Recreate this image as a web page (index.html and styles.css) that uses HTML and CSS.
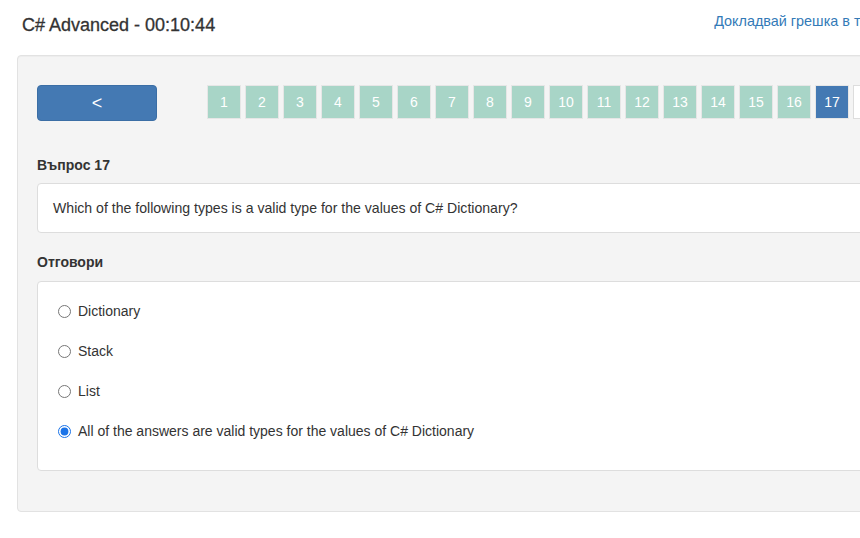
FILE: index.html
```html
<!DOCTYPE html>
<html lang="bg">
<head>
<meta charset="utf-8">
<title>C# Advanced</title>
<link rel="stylesheet" href="styles.css">
</head>
<body>
<div class="page">
  <header class="top">
    <h1 class="title">C# Advanced - 00:10:44</h1>
    <a class="report" href="#">Докладвай грешка в тест</a>
  </header>
  <main class="panel">
    <div class="nav">
      <button class="back">&lt;</button>
      <div class="pages">
        <span class="pg">1</span><span class="pg">2</span><span class="pg">3</span><span class="pg">4</span><span class="pg">5</span><span class="pg">6</span><span class="pg">7</span><span class="pg">8</span><span class="pg">9</span><span class="pg">10</span><span class="pg">11</span><span class="pg">12</span><span class="pg">13</span><span class="pg">14</span><span class="pg">15</span><span class="pg">16</span><span class="pg active">17</span><span class="pg empty"></span><span class="pg empty"></span>
      </div>
    </div>
    <div class="label q-label">Въпрос 17</div>
    <div class="box question">Which of the following types is a valid type for the values of C# Dictionary?</div>
    <div class="label a-label">Отговори</div>
    <div class="box answers">
      <label class="opt"><input type="radio" name="a"> Dictionary</label>
      <label class="opt"><input type="radio" name="a"> Stack</label>
      <label class="opt"><input type="radio" name="a"> List</label>
      <label class="opt"><input type="radio" name="a" checked> All of the answers are valid types for the values of C# Dictionary</label>
    </div>
  </main>
</div>
</body>
</html>
```

FILE: styles.css
```css
html, body {
  margin: 0;
  padding: 0;
  background: #fff;
  overflow: hidden;
}
body {
  font-family: "Liberation Sans", Arial, sans-serif;
  font-size: 14px;
  color: #333;
  line-height: 20px;
}
.page {
  width: 1100px;
}
.top {
  height: 55px;
  display: flex;
  align-items: flex-start;
}
.title {
  margin: 14px 0 0 22px;
  font-size: 18px;
  font-weight: 500;
  line-height: 22px;
  color: #333;
  -webkit-text-stroke: 0.3px #333;
}
.report {
  margin: 11px 0 0 499px;
  color: #337ab7;
  text-decoration: none;
  font-size: 14.4px;
  white-space: nowrap;
}
.panel {
  margin-left: 17px;
  background: #f4f4f4;
  border: 1px solid #e2e2e2;
  border-radius: 4px;
  padding: 29px 20px 40px 19px;
  box-shadow: inset 0 1px 1px rgba(0,0,0,0.03);
}
.nav {
  display: flex;
  align-items: flex-start;
}
.back {
  width: 120px;
  height: 36px;
  background: #4479b3;
  border: 1px solid #3b6ea5;
  border-radius: 4px;
  color: #fff;
  font-family: "Liberation Sans", Arial, sans-serif;
  font-size: 18px;
  padding: 0;
  margin-right: 50px;
}
.pages {
  display: flex;
  gap: 4px;
}
.pg {
  width: 34px;
  height: 34px;
  box-sizing: border-box;
  background: #a8d5c7;
  border: 1px solid #e6e6e6;
  color: #fff;
  display: flex;
  align-items: center;
  justify-content: center;
  font-size: 14px;
}
.pg.active {
  background: #4479b3;
  border-color: #e6e6e6;
}
.pg.empty {
  background: #fff;
  border-color: #ddd;
}
.label {
  font-weight: bold;
  font-size: 14px;
  line-height: 20px;
}
.q-label {
  margin: 34px 0 8px;
}
.a-label {
  margin: 19px 0 9px;
}
.box {
  background: #fff;
  border: 1px solid #ddd;
  border-radius: 4px;
}
.question {
  padding: 14px 15px 14px;
  line-height: 20px;
  font-size: 14.1px;
}
.answers {
  padding: 19px 20px 9px;
}
.opt {
  display: flex;
  align-items: center;
  height: 20px;
  margin-bottom: 20px;
}
.opt input {
  width: 13px;
  height: 13px;
  margin: 0 7px 0 0;
  accent-color: #1a73e8;
}
```
